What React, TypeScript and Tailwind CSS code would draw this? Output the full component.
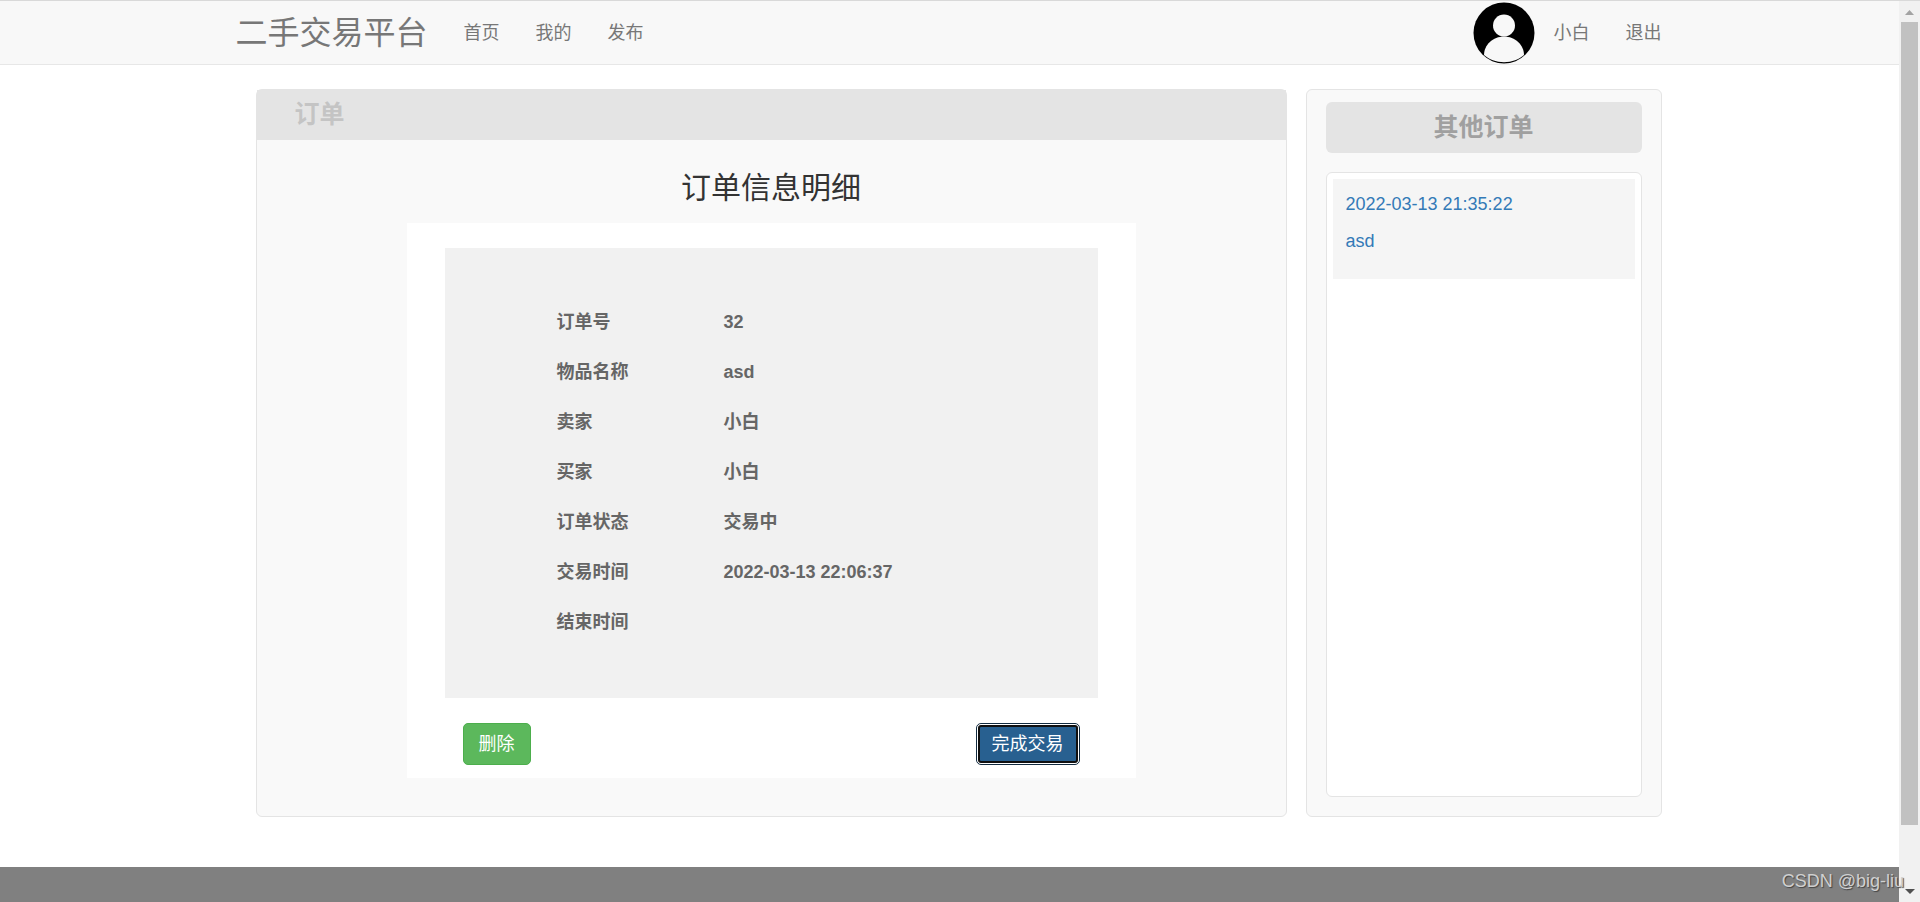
const navLinks = ['首页', '我的', '发布']

const orderRows = [
  { label: '订单号', value: '32' },
  { label: '物品名称', value: 'asd' },
  { label: '卖家', value: '小白' },
  { label: '买家', value: '小白' },
  { label: '订单状态', value: '交易中' },
  { label: '交易时间', value: '2022-03-13 22:06:37' },
  { label: '结束时间', value: '' },
]

const otherOrders = [{ time: '2022-03-13 21:35:22', name: 'asd' }]

function Avatar() {
  return (
    <svg className="mr-[19px] h-[62px] w-[62px]" viewBox="0 0 62 62">
      <circle cx="31" cy="31" r="30.5" fill="#000" />
      <circle cx="31" cy="23.500" r="11" fill="#f8f8f8" />
      <path d="M11 53C11 43 20 34.500 31 34.500S51 43 51 53C46 57.500 39 60.200 31 60.200S16 57.500 11 53Z" fill="#f8f8f8" />
    </svg>
  )
}

function Navbar() {
  return (
    <nav className="h-[65px] border-t border-b border-t-[#d9d9d9] border-b-[#e7e7e7] bg-[#f8f8f8] text-[#777]">
      <div className="mx-auto flex h-full max-w-[1464px] items-center justify-between pr-5 pl-[18px]">
        <div className="flex items-center gap-9">
          <a href="#" className="text-[32px] leading-[40px]">二手交易平台</a>
          {navLinks.map((link) => (
            <a key={link} href="#">{link}</a>
          ))}
        </div>
        <div className="flex items-center">
          <Avatar />
          <a href="#" className="mr-9">小白</a>
          <a href="#">退出</a>
        </div>
      </div>
    </nav>
  )
}

function OrderDetail() {
  return (
    <section className="flex-1 rounded-md border border-[#e4e4e4] bg-[#f9f9f9]">
      <h2 className="h-[50px] bg-[#e4e4e4] pl-[38px] text-[25px] leading-[48px] font-bold text-[#c4c4c4]">订单</h2>
      <h1 className="pt-7 pb-[15px] text-center text-[30px] leading-[40px] text-[#333]">订单信息明细</h1>
      <div className="mx-[150px] mb-[38px] bg-white px-[38px] pt-[25px] pb-[13px]">
        <table className="block bg-[#f1f1f1] pt-[49px] pb-[51px] pl-[112px] text-left font-bold text-[#666]">
          <tbody>
            {orderRows.map((row) => (
              <tr key={row.label} className="h-[50px]">
                <th scope="row" className="w-[167px]">{row.label}</th>
                <td>{row.value}</td>
              </tr>
            ))}
          </tbody>
        </table>
        <div className="mt-[25px] flex justify-between px-[18px] text-white">
          <button className="h-[42px] rounded-[5px] border border-[#4cae4c] bg-[#5cb85c] px-[15px]">删除</button>
          <button className="h-[42px] rounded-[5px] border border-[#122b40] bg-white p-px">
            <span className="flex h-full items-center rounded-[3px] border-2 border-[#101010] bg-[#286090] px-3">完成交易</span>
          </button>
        </div>
      </div>
    </section>
  )
}

function OtherOrders() {
  return (
    <aside className="flex w-[356px] flex-col rounded-md border border-[#e4e4e4] bg-[#f9f9f9] px-[19px] pt-3 pb-[19px]">
      <h2 className="h-[51px] rounded-md bg-[#e4e4e4] text-center text-[25px] leading-[50px] font-bold text-[#a0a0a0]">
        其他订单
      </h2>
      <div className="mt-[19px] flex-1 rounded-md border border-[#e4e4e4] bg-white p-1.5">
        {otherOrders.map((order) => (
          <a key={order.time} href="#" className="block h-[100px] bg-[#f5f5f5] px-[13px] pt-3 text-[#337ab7]">
            <p className="mb-[11px]">{order.time}</p>
            <p>{order.name}</p>
          </a>
        ))}
      </div>
    </aside>
  )
}

function Scrollbar() {
  return (
    <div className="flex w-[21px] flex-col items-center border-t border-[#d9d9d9] bg-[#f1f1f1]">
      <svg className="h-[21px] w-[17px]" viewBox="0 0 17 21">
        <path d="M4 14h9l-4.500-5z" fill="#a3a3a3" />
      </svg>
      <div className="h-[803px] w-[17px] bg-[#c1c1c1]" />
      <svg className="mt-auto h-[21px] w-[17px]" viewBox="0 0 17 21">
        <path d="M4 8h10l-5 5z" fill="#505050" />
      </svg>
    </div>
  )
}

export default function App() {
  return (
    <div className="relative flex min-h-screen bg-white font-['Liberation_Sans','Noto_Sans_CJK_SC',sans-serif] text-[18px] leading-[26px]">
      <div className="flex flex-1 flex-col">
        <Navbar />
        <main className="mx-auto mt-6 mb-[50px] flex w-full max-w-[1464px] gap-[19px] pr-5 pl-[38px]">
          <OrderDetail />
          <OtherOrders />
        </main>
        <footer className="min-h-[35px] flex-1 bg-[#808080]" />
      </div>
      <Scrollbar />
      <div className="absolute right-4 bottom-2 text-[18px] leading-[26px] text-[#d0d0d0] [text-shadow:1px_1px_1px_#444]">
        CSDN @big-liu
      </div>
    </div>
  )
}
